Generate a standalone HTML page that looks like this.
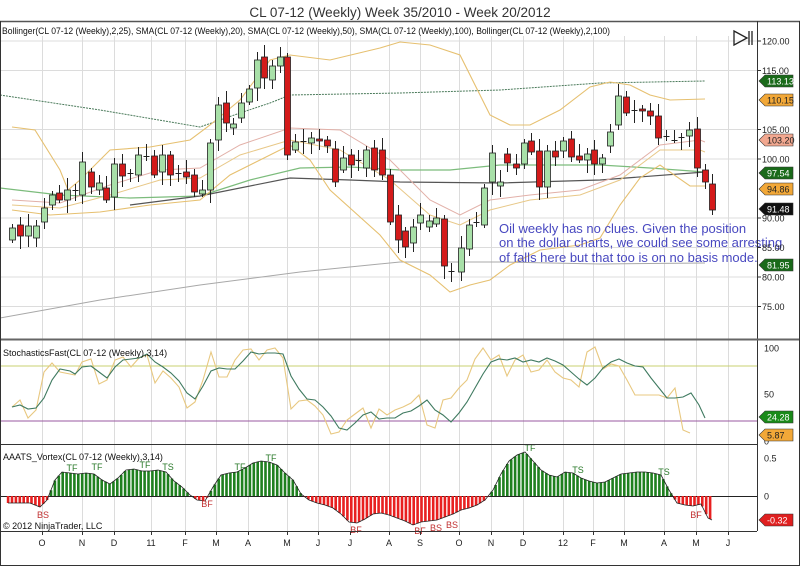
<!DOCTYPE html>
<html><head><meta charset="utf-8"><style>
html,body{margin:0;padding:0;background:#fff;}
svg{display:block;font-family:"Liberation Sans",Arial,sans-serif;}
</style></head><body>
<svg id="s" width="800" height="567" viewBox="0 0 800 567" xmlns="http://www.w3.org/2000/svg">
<rect width="800" height="567" fill="#fff"/>
<text x="400" y="17" font-size="13.5" text-anchor="middle" fill="#333">CL 07-12 (Weekly)  Week 35/2010 - Week 20/2012</text>
<g id="grid" stroke="#dcdcdc" stroke-width="1"></g>
<g id="main"></g>
<text x="2" y="34" font-size="9" fill="#111" textLength="608" lengthAdjust="spacingAndGlyphs">Bollinger(CL 07-12 (Weekly),2,25), SMA(CL 07-12 (Weekly),20), SMA(CL 07-12 (Weekly),50), SMA(CL 07-12 (Weekly),100), Bollinger(CL 07-12 (Weekly),2,100)</text>
<path d="M734 31 L747 38 L734 45 Z M749 31 V45 M752 31 V45" fill="none" stroke="#222" stroke-width="1.3"/>
<g font-size="13" fill="#4848c0">
<text x="499" y="233">Oil weekly has no clues. Given the position</text>
<text x="499" y="247">on the dollar charts, we could see some arresting</text>
<text x="499" y="262">of falls here but that too is on no basis mode.</text>
</g>
<text x="3" y="356" font-size="9" fill="#111">StochasticsFast(CL 07-12 (Weekly),3,14)</text>
<text x="3" y="460" font-size="9" fill="#111">AAATS_Vortex(CL 07-12 (Weekly),3,14)</text>
<text x="3" y="529" font-size="9" fill="#111">© 2012 NinjaTrader, LLC</text>
<line x1="0" y1="21.5" x2="800" y2="21.5" stroke="#555" stroke-width="1.5"/>
<line x1="757.5" y1="21" x2="757.5" y2="531" stroke="#333"/>
<line x1="0" y1="339.5" x2="800" y2="339.5" stroke="#666" stroke-width="2"/>
<line x1="0" y1="444.5" x2="757" y2="444.5" stroke="#333"/>
<line x1="0" y1="531.5" x2="757" y2="531.5" stroke="#333"/>
<line x1="0" y1="565.5" x2="800" y2="565.5" stroke="#333"/>
<line x1="0.5" y1="21" x2="0.5" y2="566" stroke="#333"/>
<line x1="799.5" y1="21" x2="799.5" y2="566" stroke="#333"/>
<g id="axis" font-size="9" fill="#222"></g>
<g id="tags" font-size="9"></g>
</svg>
<script>
var NS="http://www.w3.org/2000/svg";
function el(p,t,a,txt){var e=document.createElementNS(NS,t);for(var k in a)e.setAttribute(k,a[k]);if(txt!=null)e.textContent=txt;document.getElementById(p).appendChild(e);return e;}
var mx=[[42,"O"],[82,"N"],[114,"D"],[151,"11"],[185,"F"],[216,"M"],[248,"A"],[287,"M"],[318,"J"],[350,"J"],[389,"A"],[420,"S"],[459,"O"],[491,"N"],[523,"D"],[563,"12"],[593,"F"],[624,"M"],[664,"A"],[696,"M"],[728,"J"]];
mx.forEach(function(m){el("grid","line",{x1:m[0]+.5,y1:36,x2:m[0]+.5,y2:531});el("axis","text",{x:m[0],y:546,"text-anchor":"middle"},m[1]);el("axis","line",{x1:m[0]+.5,y1:531,x2:m[0]+.5,y2:535,stroke:"#333"});});
function py(p){return 41+(120-p)*5.9;}
[120,115,105,100,90,85,80,75].forEach(function(p){var y=py(p);el("grid","line",{x1:0,y1:y,x2:757,y2:y});el("axis","text",{x:762,y:y+3.5},p.toFixed(2));el("axis","line",{x1:757,y1:y,x2:761,y2:y,stroke:"#333"});});
[[100,348],[50,394],[0,441]].forEach(function(a){el("axis","text",{x:764,y:a[1]+3.5},a[0]);});
[["0.5",458],["0",496]].forEach(function(a){el("axis","text",{x:764,y:a[1]+3.5},a[0]);});
el("grid","line",{x1:0,y1:366,x2:757,y2:366,stroke:"#c8d070"});
el("grid","line",{x1:0,y1:421,x2:757,y2:421,stroke:"#9a5aa0"});
el("grid","line",{x1:0,y1:496.5,x2:757,y2:496.5,stroke:"#222"});
function pl(pts,c,w,dash){var a={points:pts,fill:"none",stroke:c,"stroke-width":w||1};if(dash)a["stroke-dasharray"]=dash;el("main","polyline",a);}
pl("0,318 100,300 200,285 300,272 400,262 500,262 600,264 705,263","#a8a8a8",1);
pl("0,95 100,110 200,127 240,113 270,103 290,95 400,93 500,90 600,83 705,81","#4a7a5a",1,"2,1");
pl("0,188 60,195 130,198 200,196 250,180 300,168 350,167 400,170 450,170 500,165 550,165 600,165 650,168 705,172","#7cbc7c",1.2);
pl("130,205 200,196 290,178 350,180 400,182 500,183 600,180 705,172","#555",1.2);
pl("12,127 35,130 60,170 68,190 80,180 110,150 150,147 190,140 210,125 240,100 270,60 290,55 330,60 380,48 400,42 430,45 460,55 475,85 490,115 510,125 530,125 560,110 590,87 610,82 630,85 650,95 670,100 705,99","#e6c070",1.1);
pl("12,210 50,215 100,212 150,205 200,200 230,175 260,160 290,145 310,160 330,190 380,235 400,260 430,275 450,292 470,285 490,280 510,265 540,250 580,245 600,238 620,205 640,178 660,165 690,186 705,186","#e6c070",1.1);
pl("12,200 60,203 110,185 160,170 200,168 240,145 290,128 340,130 390,160 430,200 460,215 490,200 530,195 580,190 620,175 660,145 700,140 705,142","#e2b0a8",1);
pl("12,205 60,208 110,195 160,180 200,178 240,155 290,140 340,150 390,180 430,215 460,225 490,210 530,200 580,195 620,180 660,150 700,150 705,152","#e8c888",1);
var C=[[12,"g",228,240],[20,"r",225,236],[28,"g",226,236],[36,"g",226,238],[44,"g",208,222],[52,"g",195,205],[59,"r",193,200],[67,"g",190,200],[75,"d",190,190],[82,"g",162,195],[91,"r",172,187],[99,"g",183,190],[106,"r",188,200],[114,"g",164,197],[122,"r",164,176],[130,"d",173,173],[138,"g",155,175],[146,"d",156,156],[154,"r",156,175],[162,"g",155,172],[170,"r",155,175],[178,"d",173,173],[186,"r",172,177],[194,"r",175,192],[202,"g",190,194],[210,"g",143,190],[218,"g",105,140],[226,"r",103,123],[233,"g",124,128],[241,"g",103,118],[249,"g",89,102],[257,"g",60,88],[264,"r",57,78],[272,"g",66,80],[280,"g",57,66],[287,"r",57,155],[295,"g",142,150],[303,"d",141,141],[311,"g",138,143],[319,"r",139,141],[327,"r",140,146],[335,"r",149,182],[343,"g",158,170],[351,"r",155,165],[358,"d",160,160],[366,"g",150,168],[374,"r",148,170],[382,"r",150,175],[390,"r",175,222],[398,"r",215,240],[405,"r",231,247],[413,"g",227,243],[420,"g",215,223],[429,"g",221,227],[436,"g",218,224],[444,"r",219,266],[451,"d",271,271],[461,"g",248,272],[469,"g",225,249],[476,"d",222,222],[484,"g",188,225],[492,"g",153,182],[500,"g",182,186],[507,"r",154,163],[516,"r",164,168],[524,"g",143,164],[531,"r",141,152],[539,"r",151,187],[547,"g",151,187],[555,"r",151,157],[563,"g",141,151],[571,"r",139,157],[579,"r",156,160],[587,"g",154,160],[594,"r",150,164],[602,"g",158,164],[610,"g",132,146],[618,"g",96,125],[626,"r",97,113],[634,"d",110,110],[642,"r",109,111],[650,"r",111,116],[658,"r",116,138],[666,"d",136,136],[674,"d",140,140],[681,"d",137,137],[689,"g",130,136],[697,"r",129,168],[705,"r",170,182],[712,"r",184,210]];
C.forEach(function(c,i){var x=c[0],t=c[2],b=c[3];var hw=4+((i*7)%5)*2,lw=3+((i*11)%6)*2;
el("main","line",{x1:x+.5,y1:t-hw,x2:x+.5,y2:b+lw,stroke:"#222"});
if(c[1]=="d"){el("main","line",{x1:x-2.5,y1:t+.5,x2:x+3.5,y2:t+.5,stroke:"#222"});}
else el("main","rect",{x:x-2.5,y:t,width:6,height:Math.max(b-t,2),fill:c[1]=="g"?"#a8e0a8":"#d41a1a",stroke:"#222","stroke-width":.8});});
var G=[[12,407],[20,405],[28,409],[36,408],[44,398],[52,380],[60,369],[70,371],[75,374],[82,367],[91,366],[99,372],[107,378],[115,367],[123,360],[131,359],[139,358],[147,354],[155,362],[163,367],[171,373],[179,381],[187,393],[195,399],[203,386],[211,371],[219,368],[227,369],[235,369],[243,361],[251,352],[259,354],[267,353],[275,353],[283,354],[291,376],[299,389],[307,399],[315,400],[323,407],[331,416],[339,428],[347,430],[355,423],[363,415],[371,412],[379,419],[387,418],[395,418],[403,413],[411,411],[419,406],[427,400],[435,410],[443,415],[451,422],[459,413],[467,402],[475,388],[483,374],[491,362],[499,359],[507,360],[515,358],[523,362],[531,360],[539,362],[547,358],[555,361],[563,365],[571,372],[579,379],[587,385],[595,378],[603,368],[611,362],[619,359],[627,363],[635,366],[643,367],[651,378],[659,388],[667,398],[675,398],[683,397],[691,393],[699,405],[705,418]];
var Y=[[12,407],[20,400],[28,418],[36,410],[44,372],[52,363],[60,372],[70,374],[75,375],[82,362],[91,359],[99,384],[107,380],[115,360],[123,357],[131,367],[139,358],[147,355],[155,383],[163,371],[171,378],[179,387],[187,408],[195,402],[203,380],[211,352],[219,377],[227,377],[235,360],[243,350],[251,349],[259,360],[267,350],[275,348],[283,358],[291,409],[299,401],[307,400],[315,406],[323,415],[331,434],[339,432],[347,420],[355,414],[363,408],[371,428],[379,409],[387,415],[395,410],[403,407],[411,403],[419,395],[427,425],[435,428],[443,400],[451,398],[459,388],[467,380],[475,359],[483,348],[491,360],[499,355],[507,376],[515,360],[523,355],[531,372],[539,370],[547,360],[555,372],[563,378],[571,380],[579,387],[587,352],[595,347],[603,369],[611,364],[619,366],[627,380],[635,395],[643,395],[651,395],[659,395],[667,398],[675,388],[683,430],[690,433]];
pl(Y.join(" "),"#e8c880",1.1);pl(G.join(" "),"#3f7a60",1.1);
var V=[[8,503],[20,503],[30,503],[40,507],[47,500],[55,480],[62,472],[70,473],[78,474],[86,473],[94,474],[102,480],[110,484],[118,478],[126,470],[134,469],[142,471],[150,471],[158,470],[166,472],[174,481],[182,487],[190,495],[197,500],[205,501],[213,487],[221,475],[229,473],[237,472],[245,468],[253,463],[261,461],[269,462],[277,465],[285,473],[293,480],[301,494],[309,500],[317,503],[325,505],[333,508],[341,514],[349,522],[357,523],[365,519],[373,514],[381,513],[389,515],[397,518],[405,521],[413,525],[421,522],[429,521],[437,520],[445,517],[453,514],[461,510],[469,508],[477,505],[485,500],[493,490],[501,474],[509,461],[517,455],[525,452],[533,461],[541,470],[549,475],[557,477],[565,472],[573,473],[581,478],[589,481],[597,483],[605,482],[613,478],[621,474],[629,473],[637,472],[645,472],[653,473],[661,475],[669,490],[677,503],[685,505],[693,506],[701,504],[708,518],[712,520]];
function vy(x){for(var i=0;i<V.length-1;i++){if(x>=V[i][0]&&x<=V[i+1][0]){var f=(x-V[i][0])/(V[i+1][0]-V[i][0]);return V[i][1]+f*(V[i+1][1]-V[i][1]);}}return 496;}
for(var x=8;x<=712;x+=3.9){var y=vy(x);var up=y<496;el("main","rect",{x:x-1.2,y:Math.min(y,496),width:2.6,height:Math.abs(y-496),fill:up?"#1f801f":"#e82020"});}
pl(V.join(" "),"#222",0.8);
var L=[["BS",43,518,"r"],["TF",72,471,"g"],["TF",97,470,"g"],["TF",145,468,"g"],["TS",168,470,"g"],["BF",207,507,"r"],["TF",240,470,"g"],["TF",271,461,"g"],["BF",356,533,"r"],["BF",420,534,"r"],["BS",436,531,"r"],["BS",452,528,"r"],["TF",530,451,"g"],["TS",578,473,"g"],["TS",664,475,"g"],["BF",696,518,"r"]];
L.forEach(function(l){el("main","text",{x:l[1],y:l[2],"font-size":"9","text-anchor":"middle",fill:l[3]=="g"?"#2a7a2a":"#c03030"},l[0]);});
function tag(y,txt,bg,fg){el("tags","path",{d:"M759 "+y+" l6 -6 h28 v12 h-28 z",fill:bg,stroke:"#333","stroke-width":.6});el("tags","text",{x:767,y:y+3.5,fill:fg},txt);}
tag(81,"113.13","#1a6a1a","#fff");tag(100,"110.15","#f2a838","#222");tag(140,"103.20","#f2a890","#222");
tag(173,"97.54","#1a6a1a","#fff");tag(189,"94.86","#f2a838","#222");tag(209,"91.48","#111","#fff");tag(265,"81.95","#1a6a1a","#fff");
tag(417,"24.28","#1a8a1a","#fff");tag(435,"5.87","#f2a838","#222");tag(520,"-0.32","#e02020","#fff");
</script>
</body></html>
